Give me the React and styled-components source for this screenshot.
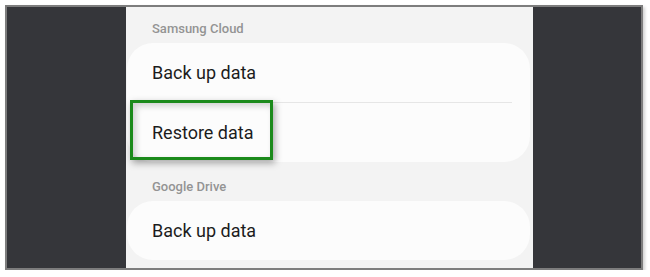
import * as React from "react"
import styled, { createGlobalStyle } from "styled-components"

const sections = [
  { title: "Samsung Cloud", rows: ["Back up data", "Restore data"], marked: 1 },
  { title: "Google Drive", rows: ["Back up data"] },
]

const App = () => (
  <>
    <GlobalStyle />
    <StFrame>
      <StSide />
      <StContent>
        {sections.map(({ title, rows, marked }) => (
          <StSection key={title}>
            <StLabel>{title}</StLabel>
            <StCard>
              {rows.map((row, i) => (
                <StRow key={row} $divided={i > 0}>
                  {row}
                  {marked === i && <StMark />}
                </StRow>
              ))}
            </StCard>
          </StSection>
        ))}
      </StContent>
      <StSide />
    </StFrame>
  </>
)
export default App

const GlobalStyle = createGlobalStyle`
  body {
    margin: 0;
    background: #ffffff;
    font-family: Roboto, "Liberation Sans", sans-serif;
  }
`
const StFrame = styled.div`
  margin: 5px 0 0 5px;
  width: 638px;
  height: 265px;
  box-sizing: border-box;
  border: 2px solid #7d7d7d;
  box-shadow: 2px 2px 3px rgba(0, 0, 0, 0.18);
  display: grid;
  grid-template-columns: 119px 407px 1fr;
  overflow: hidden;
`
const StSide = styled.div`
  background: #35363a;
`
const StContent = styled.div`
  background: #f3f3f3;
  padding: 14px 3px 0 1px;
  display: flex;
  flex-direction: column;
  gap: 17px;
`
const StSection = styled.section`
  display: flex;
  flex-direction: column;
`
const StLabel = styled.div`
  font-size: 13px;
  font-weight: 500;
  line-height: 16px;
  color: #939393;
  padding: 0 0 6px 25px;
`
const StCard = styled.div`
  background: #fcfcfc;
  border-radius: 26px;
  padding: 0 18px 0 25px;
`
const StRow = styled.div`
  position: relative;
  height: 59px;
  display: flex;
  align-items: center;
  font-size: 18px;
  color: #1c1c1c;
  border-top: ${props => (props.$divided ? "1px solid #e6e6e6" : "none")};
`
const StMark = styled.div`
  position: absolute;
  left: -22px;
  top: -3px;
  width: 143px;
  height: 60px;
  box-sizing: border-box;
  border: 3px solid #1b8a1b;
  box-shadow: 2px 3px 7px rgba(0, 0, 0, 0.35),
    inset 3px 3px 6px rgba(0, 0, 0, 0.18);
`
